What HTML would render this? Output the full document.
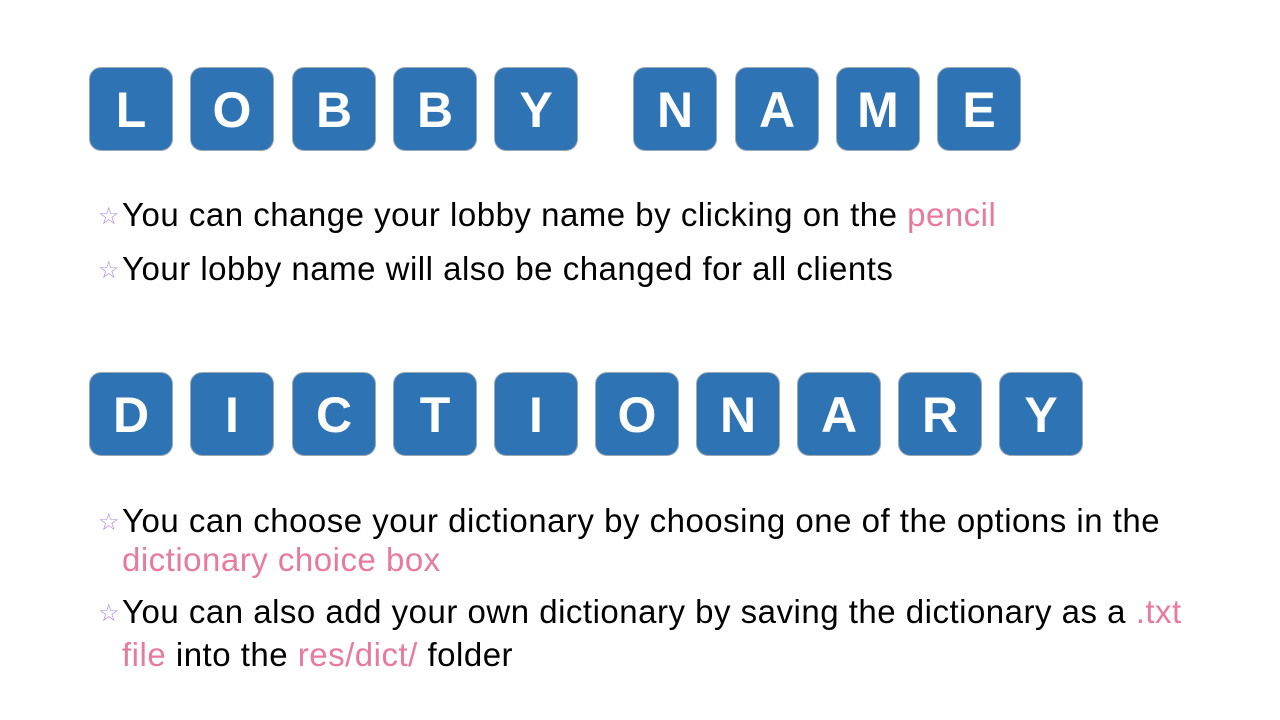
<!DOCTYPE html>
<html><head><meta charset="utf-8"><style>
body{margin:0;width:1280px;height:720px;background:#fff;position:relative;overflow:hidden;font-family:"Liberation Sans",sans-serif}
.t{position:absolute;width:84px;height:84px;background:#2e74b5;border:1px solid #a0a8b0;border-radius:12px;color:#fff;font-size:50px;font-weight:bold;text-align:center;line-height:84px;box-sizing:border-box}
.l{position:absolute;left:98px;font-size:33px;color:#000;white-space:nowrap;line-height:40px;letter-spacing:0.5px}
.s{color:#b58be0;font-size:24px;vertical-align:2px;display:inline-block;width:24px;letter-spacing:0}
.p{color:#e8799f}
</style></head><body>
<div class="t" style="left:89px;top:67px">L</div>
<div class="t" style="left:190px;top:67px">O</div>
<div class="t" style="left:292px;top:67px">B</div>
<div class="t" style="left:393px;top:67px">B</div>
<div class="t" style="left:494px;top:67px">Y</div>
<div class="t" style="left:633px;top:67px">N</div>
<div class="t" style="left:735px;top:67px">A</div>
<div class="t" style="left:836px;top:67px">M</div>
<div class="t" style="left:937px;top:67px">E</div>

<div class="l" style="top:195px"><span class="s">☆</span>You can change your lobby name by clicking on the <span class="p">pencil</span></div>
<div class="l" style="top:249px"><span class="s">☆</span>Your lobby name will also be changed for all clients</div>

<div class="t" style="left:89px;top:372px">D</div>
<div class="t" style="left:190px;top:372px">I</div>
<div class="t" style="left:292px;top:372px">C</div>
<div class="t" style="left:393px;top:372px">T</div>
<div class="t" style="left:494px;top:372px">I</div>
<div class="t" style="left:595px;top:372px">O</div>
<div class="t" style="left:696px;top:372px">N</div>
<div class="t" style="left:797px;top:372px">A</div>
<div class="t" style="left:898px;top:372px">R</div>
<div class="t" style="left:999px;top:372px">Y</div>

<div class="l" style="top:501px"><span class="s">☆</span>You can choose your dictionary by choosing one of the options in the</div>
<div class="l" style="top:540px;left:122px"><span class="p">dictionary choice box</span></div>
<div class="l" style="top:592px"><span class="s">☆</span>You can also add your own dictionary by saving the dictionary as a <span class="p">.txt</span></div>
<div class="l" style="top:635px;left:122px"><span class="p">file</span> into the <span class="p">res/dict/</span> folder</div>
</body></html>
